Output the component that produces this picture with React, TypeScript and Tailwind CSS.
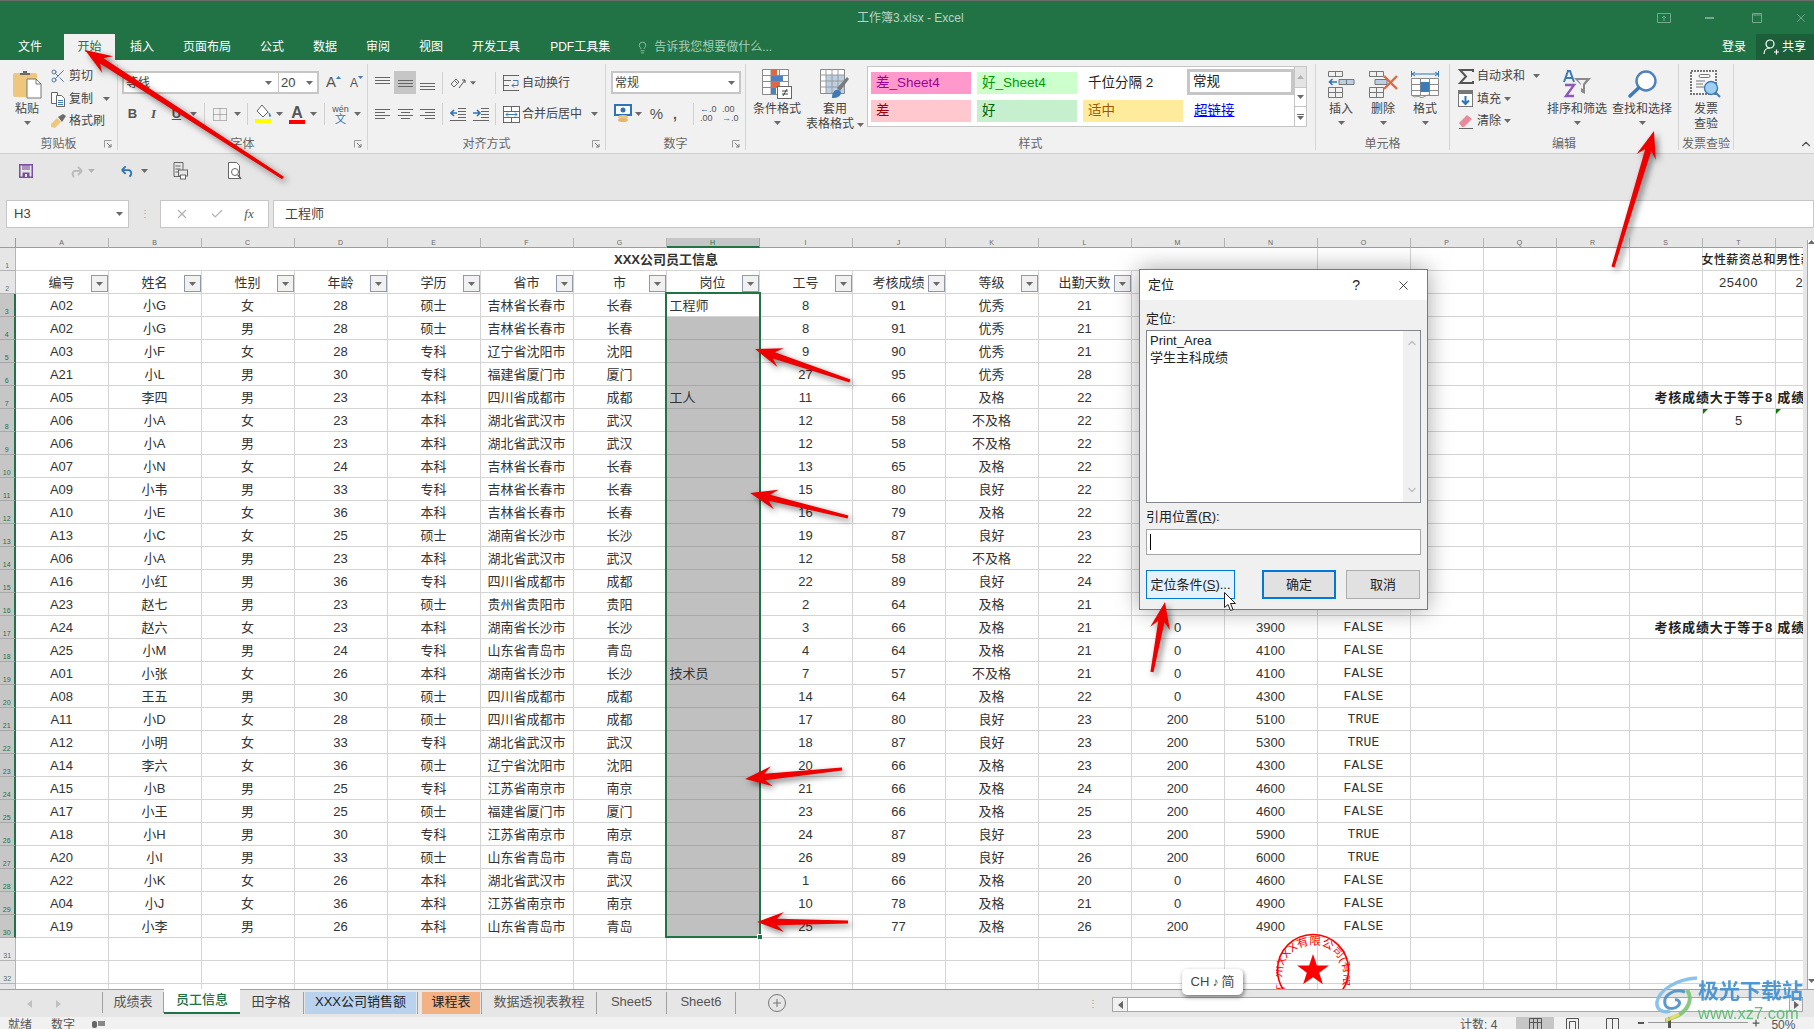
import type { ReactNode } from "react";
import { Scissors, X, Lightbulb, ChevronUp, Plus, Check } from "lucide-react";

const Caret = ({ className = "" }: { className?: string }) => (
  <svg width="7" height="4" viewBox="0 0 7 4" className={className}>
    <path d="M0 0h7L3.5 4z" fill="#6a6a6a" />
  </svg>
);

const Sep = ({ className = "" }: { className?: string }) => (
  <div className={"flex h-[22px] justify-center " + className}>
    <div className="h-full w-px bg-[#d0d0d0]" />
  </div>
);

const Launcher = () => (
  <svg width="9" height="9" viewBox="0 0 9 9" className="absolute bottom-[1px] right-[4px]">
    <path d="M0.5 0.5h7M0.5 0.5v7" stroke="#9a9a9a" fill="none" />
    <path d="M3 3l4 4M7 4v3H4" stroke="#777" fill="none" />
  </svg>
);

const Group = ({ width, label, launcher, children }: { width: string; label: string; launcher?: boolean; children: ReactNode }) => (
  <div className={"relative flex h-[86px] shrink-0 flex-col border-r border-[#d5d5d5] " + width}>
    <div className="flex h-[71px]">{children}</div>
    <div className="h-[15px] whitespace-nowrap text-center text-[12px] leading-[19px] text-[#666]">{label}</div>
    {launcher && <Launcher />}
  </div>
);

const BigButton = ({ width, icon, lines, caret = true }: { width: string; icon: ReactNode; lines: string[]; caret?: boolean }) => (
  <div className={"flex shrink-0 flex-col items-center pt-[4px] " + width}>
    <div className="flex h-[34px] items-center justify-center pb-[2px]">{icon}</div>
    {lines.map((l) => (
      <div key={l} className="whitespace-nowrap text-[12px] leading-[15px] text-[#444]">{l}</div>
    ))}
    {caret && lines.length === 1 && <Caret className="mt-[4px]" />}
  </div>
);

const Lines = ({ kind }: { kind: "top" | "mid" | "bot" | "left" | "center" | "right" }) => {
  const c = "#666";
  if (kind === "top" || kind === "mid" || kind === "bot") {
    const y = kind === "top" ? 1 : kind === "mid" ? 4 : 7;
    return (
      <svg width="15" height="14" viewBox="0 0 15 14">
        <path d={`M0 ${y}.5h15M0 ${y + 3}.5h15M0 ${y + 6}.5h15`} stroke={c} />
      </svg>
    );
  }
  const d =
    kind === "left"
      ? "M0 1.5h15M0 4.5h10M0 7.5h15M0 10.5h10"
      : kind === "center"
        ? "M0 1.5h15M3 4.5h9M0 7.5h15M3 10.5h9"
        : "M0 1.5h15M5 4.5h10M0 7.5h15M5 10.5h10";
  return (
    <svg width="15" height="12" viewBox="0 0 15 12">
      <path d={d} stroke={c} />
    </svg>
  );
};

const PasteIcon = () => (
  <svg width="30" height="29" viewBox="0 0 30 29">
    <rect x="1" y="3" width="24" height="24" rx="2" fill="#eec77f" />
    <path d="M8 5V3h3V1h4v2h3v2z" fill="#6b6b6b" />
    <path d="M15 9h9l5 5v14H15z" fill="#fff" stroke="#777" />
    <path d="M24 9v5h5" fill="none" stroke="#777" />
  </svg>
);

const CopyIcon = () => (
  <svg width="16" height="16" viewBox="0 0 16 16" fill="none" stroke="#666">
    <path d="M1.5 1.5h6v11h-6z" fill="#fff" />
    <path d="M6.5 4.5h5l3 3v8h-8z" fill="#fff" />
    <path d="M8 9.5h5M8 11.5h5M8 13.5h5" stroke="#3e7ab5" />
  </svg>
);

const BrushIcon = () => (
  <svg width="17" height="16" viewBox="0 0 17 16">
    <path d="M1 11l6-6 4 4-6 6-4-1z" fill="#eec77f" />
    <path d="M8 4l5-3 3 2-4 6z" fill="#6b6b6b" />
  </svg>
);

const FillIcon = () => (
  <svg width="17" height="20" viewBox="0 0 17 20">
    <path d="M7 1l6 7-5 5-6-6z" fill="#fff" stroke="#666" />
    <path d="M13 8c2 1 3 3 3 4s-2 1-2 0 0-2-1-4z" fill="#3e7ab5" />
    <rect x="0" y="15" width="16" height="4" fill="#ffff00" />
  </svg>
);

const FontColorIcon = () => (
  <div className="flex flex-col items-center leading-none">
    <span className="text-[16px] font-bold leading-[15px] text-[#555]">A</span>
    <div className="h-[4px] w-[16px] bg-[#ff0000]" />
  </div>
);

const OrientIcon = () => (
  <svg width="17" height="16" viewBox="0 0 17 16" fill="none" stroke="#666">
    <path d="M1 9l5-5 3 3-5 5z" />
    <path d="M5 6l2 2" />
    <path d="M9 13l6-8M15 5h-3M15 5v3" stroke="#555" />
  </svg>
);

const WrapIcon = () => (
  <svg width="17" height="16" viewBox="0 0 17 16" fill="none">
    <path d="M1 .5h15M1 5.5h7M1 10.5h5M1 15.5h15" stroke="#666" />
    <path d="M.5 0v16" stroke="#666" />
    <path d="M10 5.5h5v5H9M11 8.5l-2 2 2 2" stroke="#3e7ab5" />
  </svg>
);

const MergeIcon = () => (
  <svg width="17" height="17" viewBox="0 0 17 17" fill="none" stroke="#666">
    <rect x=".5" y=".5" width="16" height="16" fill="#fff" />
    <path d="M.5 5.5h16M.5 11.5h16M8.5 .5v5M8.5 11.5v5" />
    <path d="M3 8.5h11M5 6.5l-2 2 2 2M12 6.5l2 2-2 2" stroke="#3e7ab5" />
  </svg>
);

const IndentIcon = ({ inc }: { inc?: boolean }) => (
  <svg width="16" height="14" viewBox="0 0 16 14" fill="none">
    <path d="M8 1.5h8M8 4.5h8M8 7.5h8M8 10.5h8M0 13.5h16" stroke="#666" />
    <path d={inc ? "M0 6h6M4 3l3 3-3 3" : "M7 6H1M4 3L1 6l3 3"} stroke="#2f75b5" strokeWidth="1.6" />
  </svg>
);

const AccountingIcon = () => (
  <svg width="18" height="20" viewBox="0 0 18 20">
    <rect x="1" y="1" width="16" height="10" fill="#fff" stroke="#2f75b5" strokeWidth="2" />
    <circle cx="9" cy="6" r="2.5" fill="#2f75b5" />
    <ellipse cx="9" cy="13" rx="5" ry="2" fill="#eec77f" />
    <ellipse cx="9" cy="16" rx="5" ry="2" fill="#e3b866" />
  </svg>
);

const CondFormatIcon = () => (
  <svg width="30" height="30" viewBox="0 0 30 30">
    <path d="M.5.5h26v25H.5zM9 .5v25M17.5 .5v25M.5 6.5h26M.5 12.5h26M.5 18.5h26" fill="#fff" stroke="#8a8a8a" />
    <rect x="9" y="1" width="6" height="5" fill="#e0673f" />
    <rect x="9" y="7" width="12" height="5" fill="#4f81bd" />
    <rect x="9" y="13" width="8" height="5" fill="#e0673f" />
    <rect x="9" y="19" width="5" height="6" fill="#4f81bd" />
    <rect x="15.5" y="17.5" width="14" height="12" fill="#fff" stroke="#666" />
    <path d="M20 22h6M20 25h6M25 20l-4 7" stroke="#444" fill="none" />
  </svg>
);

const TableFormatIcon = () => (
  <svg width="30" height="30" viewBox="0 0 30 30">
    <path d="M.5.5h24v24H.5z" fill="#fff" stroke="#8a8a8a" />
    <rect x="6" y="6" width="18" height="18" fill="#bcd0e5" />
    <path d="M6 .5v24M12 .5v24M18 .5v24M.5 6h24M.5 12h24M.5 18h24" stroke="#9a9a9a" fill="none" />
    <path d="M17 19L27 8l2 2-9 12z" fill="#7a7a7a" />
    <path d="M12 29c0-6 3-9 7-8l2 2c0 4-3 6-9 6z" fill="#3e7ab5" />
  </svg>
);

const InsertCellIcon = () => (
  <svg width="27" height="27" viewBox="0 0 27 27" fill="none" stroke="#777">
    <path d="M.5.5h14v5H.5zM7.5 .5v5M.5 16.5h14v10H.5zM.5 21.5h14M7.5 16.5v10" />
    <path d="M11 8.5h15v5H11zM18.5 8.5v5" fill="#bcd0e5" />
    <path d="M9 11H2M4.5 8L1.5 11l3 3" stroke="#2f75b5" strokeWidth="1.6" />
  </svg>
);

const DeleteCellIcon = () => (
  <svg width="29" height="27" viewBox="0 0 29 27" fill="none" stroke="#777">
    <path d="M.5.5h14v5H.5zM7.5 .5v5M.5 16.5h14v10H.5zM.5 21.5h14M7.5 16.5v10" />
    <path d="M6 8.5h12v5H6z" fill="#bcd0e5" />
    <path d="M15 5l13 13M28 5L15 18" stroke="#e0673f" strokeWidth="2.4" />
  </svg>
);

const FormatCellIcon = () => (
  <svg width="28" height="30" viewBox="0 0 28 30" fill="none" stroke="#8a8a8a">
    <path d="M1 5h26" stroke="#2f75b5" />
    <path d="M.5 2v6M27.5 2v6" stroke="#2f75b5" />
    <path d="M4 3L1 5l3 2M24 3l3 2-3 2" stroke="#2f75b5" />
    <path d="M.5 9.5h27v17H.5zM9.5 9.5v17M18.5 9.5v17M.5 15.5h27M.5 21.5h27" fill="#fff" />
    <rect x="9.5" y="13" width="9" height="10" fill="#3e7ab5" stroke="none" />
    <path d="M1 26c2 4 5 0 8 2 3 2 5-2 9-2" />
  </svg>
);

const SumIcon = () => (
  <svg width="16" height="15" viewBox="0 0 16 15" fill="none">
    <path d="M15 3V1H2l6 6.5L2 14h13v-2" stroke="#555" strokeWidth="2" />
  </svg>
);

const FillDownIcon = () => (
  <svg width="15" height="17" viewBox="0 0 15 17">
    <rect x=".5" y=".5" width="14" height="16" fill="#fff" stroke="#777" />
    <rect x="0" y="0" width="15" height="4" fill="#777" />
    <path d="M7.5 6v8M4 10.5l3.5 3.5 3.5-3.5" stroke="#2f75b5" strokeWidth="2" fill="none" />
  </svg>
);

const EraserIcon = () => (
  <svg width="16" height="15" viewBox="0 0 16 15">
    <path d="M1 9l8-8 5 4-8 8H4z" fill="#e98a9a" />
    <path d="M1 14.5h14" stroke="#666" />
  </svg>
);

const SortIcon = () => (
  <svg width="30" height="28" viewBox="0 0 30 28">
    <path d="M2 12L6 1h2l4 11M4 8h6" stroke="#3e7ab5" strokeWidth="2" fill="none" />
    <path d="M3 15h9L4 26h8" stroke="#8a5ab5" strokeWidth="2.4" fill="none" />
    <path d="M12 8h17l-6 7v9l-4-2v-7z" fill="#8a8a8a" />
    <path d="M16 10h8l-3 4v5l-2-1v-4z" fill="#f1f1f1" />
  </svg>
);

const FindIcon = () => (
  <svg width="29" height="28" viewBox="0 0 29 28" fill="none">
    <circle cx="18" cy="11" r="9.5" stroke="#4f81bd" strokeWidth="2.4" fill="#fff" />
    <path d="M10.5 18L2 26" stroke="#3e7ab5" strokeWidth="3.4" strokeLinecap="round" />
  </svg>
);

const InvoiceIcon = () => (
  <svg width="32" height="28" viewBox="0 0 32 28" fill="none">
    <rect x="1" y="1" width="25" height="23" fill="#f6f6f6" stroke="#777" strokeWidth="2" strokeDasharray="2 1" />
    <rect x="9" y="4.5" width="11" height="3" rx="1.5" stroke="#777" />
    <path d="M6 11h9M6 14h7M6 17h9" stroke="#777" />
    <circle cx="21" cy="18" r="6.5" fill="#9fd0f2" stroke="#3e7ab5" strokeWidth="1.4" />
    <path d="M26 23l4 4" stroke="#3e7ab5" strokeWidth="2" />
  </svg>
);

const Ribbon = () => (
  <div className="flex h-[94px] shrink-0 border-b border-[#d0d0d0] bg-[#f1f1f1] pt-[4px]">
    <Group width="w-[118px]" label="剪贴板" launcher>
      <div className="ml-[9px] flex w-[36px] flex-col items-center pt-[4px]">
        <div className="flex h-[34px] items-center pb-[2px]"><PasteIcon /></div>
        <div className="text-[12px] leading-[15px] text-[#444]">粘贴</div>
        <Caret className="mt-[4px]" />
      </div>
      <div className="ml-[5px] flex flex-col pt-px">
        {[
          [<Scissors key="s" size={16} strokeWidth={1.4} className="text-[#4a6f98]" />, "剪切"],
          [<CopyIcon key="c" />, "复制"],
          [<BrushIcon key="b" />, "格式刷"],
        ].map(([icon, label], i) => (
          <div key={i} className="flex h-[22.5px] items-center text-[12px] text-[#444]">
            <span className="flex w-[19px] justify-start">{icon}</span>
            <span>{label}</span>
            {i === 1 && <Caret className="ml-[10px]" />}
          </div>
        ))}
      </div>
    </Group>

    <Group width="w-[250px]" label="字体" launcher>
      <div className="flex flex-col">
        <div className="ml-[4px] mt-[7px] flex h-[23px] items-center">
          <div className="flex h-full w-[157px] items-center justify-between border-2 border-r border-[#c6c6c6] bg-white px-[2px] text-[12px] text-[#444]">
            <span>等线</span>
            <Caret className="mr-[4px]" />
          </div>
          <div className="flex h-full w-[40px] items-center justify-between border-2 border-l-0 border-[#c6c6c6] bg-white pl-[2px] pr-[4px] text-[13px] text-[#444]">
            <span>20</span>
            <Caret />
          </div>
          <span className="ml-[7px] text-[15px] text-[#555]">A</span>
          <svg width="5" height="3" viewBox="0 0 5 3" className="mb-[10px]"><path d="M0 3h5L2.5 0z" fill="#3e7ab5" /></svg>
          <span className="ml-[9px] text-[12px] text-[#555]">A</span>
          <svg width="5" height="3" viewBox="0 0 5 3" className="mb-[10px]"><path d="M0 0h5L2.5 3z" fill="#3e7ab5" /></svg>
        </div>
        <div className="mt-[8px] flex h-[24px] items-center pl-[6px]">
          <span className="w-[17px] text-center font-bold text-[13px] text-[#555]">B</span>
          <span className="w-[25px] text-center font-bold italic text-[13px] text-[#555] [font-family:'Liberation_Serif',serif]">I</span>
          <span className="w-[21px] text-center font-bold text-[13px] text-[#555] underline">U</span>
          <span className="flex w-[12px] justify-center"><Caret /></span>
          <Sep className="w-[10px]" />
          <span className="flex w-[22px] justify-center">
            <svg width="14" height="13" viewBox="0 0 14 13" fill="none" stroke="#777" strokeDasharray="1 1"><path d="M.5.5h13v12H.5zM7 .5v12M.5 6.5h13" /></svg>
          </span>
          <span className="flex w-[12px] justify-center"><Caret /></span>
          <Sep className="w-[8px]" />
          <span className="flex w-[24px] justify-center"><FillIcon /></span>
          <span className="flex w-[9px] justify-center"><Caret /></span>
          <span className="flex w-[26px] justify-center"><FontColorIcon /></span>
          <span className="flex w-[7px] justify-center"><Caret /></span>
          <Sep className="w-[14px]" />
          <span className="flex w-[19px] flex-col items-center text-[9px] leading-[9px] text-[#555]">
            wén
            <span className="text-[11px] leading-[10px] text-[#2f75b5]">文</span>
          </span>
          <span className="flex w-[14px] justify-center"><Caret /></span>
        </div>
      </div>
    </Group>

    <Group width="w-[238px]" label="对齐方式" launcher>
      <div className="flex flex-col pl-[3px]">
        <div className="mt-[7px] flex h-[23px] items-center">
          <span className="flex w-[23px] justify-center"><Lines kind="top" /></span>
          <span className="flex h-full w-[22px] items-center justify-center bg-[#c6c6c6]"><Lines kind="mid" /></span>
          <span className="flex w-[22px] justify-center"><Lines kind="bot" /></span>
          <Sep className="w-[8px]" />
          <span className="flex w-[24px] justify-center"><OrientIcon /></span>
          <span className="flex w-[6px] justify-center"><Caret /></span>
          <Sep className="ml-[15px] w-[9px]" />
          <span className="ml-[3px] w-[17px]"><WrapIcon /></span>
          <span className="ml-[2px] text-[12px] text-[#444]">自动换行</span>
        </div>
        <div className="mt-[8px] flex h-[24px] items-center">
          <span className="flex w-[23px] justify-center"><Lines kind="left" /></span>
          <span className="flex w-[22px] justify-center"><Lines kind="center" /></span>
          <span className="flex w-[22px] justify-center"><Lines kind="right" /></span>
          <Sep className="w-[8px]" />
          <span className="flex w-[24px] justify-center"><IndentIcon /></span>
          <span className="flex w-[21px] justify-center"><IndentIcon inc /></span>
          <Sep className="w-[9px]" />
          <span className="ml-[3px] w-[17px]"><MergeIcon /></span>
          <span className="ml-[2px] text-[12px] text-[#444]">合并后居中</span>
          <Caret className="ml-[9px]" />
        </div>
      </div>
    </Group>

    <Group width="w-[140px]" label="数字" launcher>
      <div className="flex flex-col">
        <div className="ml-[5px] mt-[7px] flex h-[23px] w-[130px] items-center justify-between border-2 border-[#c6c6c6] bg-white pl-[2px] pr-[4px] text-[12px] text-[#444]">
          <span>常规</span>
          <Caret />
        </div>
        <div className="mt-[8px] flex h-[24px] items-center pl-[8px]">
          <span className="w-[18px]"><AccountingIcon /></span>
          <span className="flex w-[13px] justify-center"><Caret /></span>
          <span className="w-[23px] text-center text-[15px] text-[#555]">%</span>
          <span className="w-[14px] text-center text-[14px] font-bold text-[#555]">,</span>
          <Sep className="ml-[6px] w-[10px]" />
          <span className="ml-[2px] w-[22px] whitespace-nowrap text-[9px] leading-[9px] text-[#555]">
            <span className="text-[#2f75b5]">←</span>.0<br />.00
          </span>
          <span className="w-[18px] whitespace-nowrap text-[9px] leading-[9px] text-[#555]">
            .00<br /><span className="text-[#2f75b5]">→</span>.0
          </span>
        </div>
      </div>
    </Group>

    <Group width="w-[570px]" label="样式">
      <BigButton width="ml-[7px] w-[48px]" icon={<CondFormatIcon />} lines={["条件格式"]} />
      <div className="ml-[3px] flex w-[62px] flex-col items-center pt-[4px]">
        <div className="flex h-[34px] items-center pb-[2px]"><TableFormatIcon /></div>
        <div className="text-[12px] leading-[15px] text-[#444]">套用</div>
        <div className="flex items-center whitespace-nowrap text-[12px] leading-[15px] text-[#444]">
          表格格式
          <Caret className="ml-[3px]" />
        </div>
      </div>
      <div className="ml-[1px] mt-[2px] flex h-[61px] w-[440px] border border-[#c6c6c6] bg-white">
        <div className="grid flex-1 grid-cols-[100px_100px_100px_105px] grid-rows-[22px_22px] content-start gap-x-[6px] gap-y-[6px] pl-[3px] pt-[5px] text-[13.5px] leading-[22px]">
          <div className="bg-[#ff99cc] pl-[5px] text-[#9c0099]">差_Sheet4</div>
          <div className="bg-[#ccffcc] pl-[5px] text-[#009900]">好_Sheet4</div>
          <div className="pl-[5px] text-[#222]">千位分隔 2</div>
          <div className="-ml-[2px] -mt-[3px] h-[26px] border-[3px] border-[#c6c6c6] pl-[3px] leading-[20px] text-[#222]">常规</div>
          <div className="bg-[#ffc7ce] pl-[5px] text-[#9c0006]">差</div>
          <div className="bg-[#c6efce] pl-[5px] text-[#006100]">好</div>
          <div className="bg-[#ffeb9c] pl-[5px] text-[#9c5700]">适中</div>
          <div className="pl-[5px] text-[#0000ff] underline">超链接</div>
        </div>
        <div className="flex w-[14px] flex-col border-l border-[#c6c6c6]">
          <div className="flex h-[21px] items-center justify-center border-b border-[#c6c6c6] bg-[#e4e4e4]">
            <Caret className="rotate-180 opacity-40" />
          </div>
          <div className="flex h-[19px] items-center justify-center border-b border-[#c6c6c6]"><Caret /></div>
          <div className="flex flex-1 flex-col items-center justify-center gap-[1px]">
            <div className="h-px w-[7px] bg-[#6a6a6a]" />
            <Caret />
          </div>
        </div>
      </div>
    </Group>

    <Group width="w-[134px]" label="单元格">
      <BigButton width="ml-[4px] w-[42px]" icon={<InsertCellIcon />} lines={["插入"]} />
      <BigButton width="w-[42px]" icon={<DeleteCellIcon />} lines={["删除"]} />
      <BigButton width="w-[42px]" icon={<FormatCellIcon />} lines={["格式"]} />
    </Group>

    <Group width="w-[229px]" label="编辑">
      <div className="ml-[8px] flex w-[87px] shrink-0 flex-col pt-px text-[12px] text-[#444]">
        <div className="flex h-[22.5px] items-center">
          <span className="w-[19px]"><SumIcon /></span>自动求和<Caret className="ml-[8px]" />
        </div>
        <div className="flex h-[22.5px] items-center">
          <span className="w-[19px]"><FillDownIcon /></span>填充<Caret className="ml-[3px]" />
        </div>
        <div className="flex h-[22.5px] items-center">
          <span className="w-[19px]"><EraserIcon /></span>清除<Caret className="ml-[3px]" />
        </div>
      </div>
      <BigButton width="w-[64px]" icon={<SortIcon />} lines={["排序和筛选"]} />
      <BigButton width="w-[66px]" icon={<FindIcon />} lines={["查找和选择"]} />
    </Group>

    <Group width="w-[55px]" label="发票查验">
      <BigButton width="w-full" icon={<InvoiceIcon />} lines={["发票", "查验"]} />
    </Group>

    <div className="flex flex-1 items-end justify-end pb-[2px] pr-[1px]">
      <ChevronUp size={14} className="text-[#555]" />
    </div>
  </div>
);

const TABS: [string, string][] = [
  ["文件", "ml-[18px]"],
  ["开始", "ml-[22px]"],
  ["插入", "ml-[15px]"],
  ["页面布局", "ml-[29px]"],
  ["公式", "ml-[29px]"],
  ["数据", "ml-[29px]"],
  ["审阅", "ml-[29px]"],
  ["视图", "ml-[29px]"],
  ["开发工具", "ml-[29px]"],
  ["PDF工具集", "ml-[30px]"],
];

const TitleBar = () => (
  <div className="h-[60px] shrink-0 border-t border-[#6b6b6b] bg-[#217346]">
    <div className="relative flex h-[33px] items-center">
      <div className="w-[857px]" />
      <span className="text-[12px] text-[#b9d3c5]">工作簿3.xlsx - Excel</span>
      <div className="ml-auto flex items-center pr-[6px] text-[#76a78f]">
        <svg width="14" height="10" viewBox="0 0 14 10" fill="none" stroke="currentColor"><path d="M.5.5h13v9H.5zM7 8V3M5 5l2-2 2 2" /></svg>
        <div className="ml-[34px] h-[2px] w-[9px] bg-current" />
        <svg width="10" height="10" viewBox="0 0 10 10" fill="none" stroke="currentColor" className="ml-[38px]"><path d="M.5.5h9v9h-9zM.5 2h9" /></svg>
        <X size={14} strokeWidth={1.6} className="ml-[32px]" />
      </div>
    </div>
    <div className="flex h-[26px] items-stretch text-[12px] text-white">
      {TABS.map(([name, ml]) =>
        name === "开始" ? (
          <div key={name} className="ml-[22px] flex w-[51px] items-center justify-center bg-[#f1f1f1] text-[#217346]">{name}</div>
        ) : (
          <div key={name} className={"flex items-center whitespace-nowrap " + ml}>{name}</div>
        ),
      )}
      <div className="ml-[26px] flex items-center text-[#a9cdb9]">
        <Lightbulb size={13} strokeWidth={1.4} />
        <span className="ml-[5px]">告诉我您想要做什么...</span>
      </div>
      <div className="ml-auto flex items-center">登录</div>
      <div className="ml-[10px] flex w-[58px] items-center bg-[#1b5e39] pl-[7px]">
        <svg width="16" height="16" viewBox="0 0 16 16" fill="none" stroke="#fff" strokeWidth="1.2">
          <circle cx="7" cy="5" r="4" />
          <path d="M1 15c0-4 3-6 6-6M11 13h5M13.5 10.5v5" />
        </svg>
        <span className="ml-[3px]">共享</span>
      </div>
    </div>
  </div>
);

const QuickAccess = () => (
  <div className="flex h-[46px] shrink-0 items-center bg-[#e6e6e6] pb-[12px] pl-[19px]">
    <svg width="14" height="14" viewBox="0 0 14 14" fill="none">
      <path d="M.75.75h12.5v12.5H.75z" stroke="#7a4f9e" strokeWidth="1.5" fill="#e6e6e6" />
      <rect x="3" y="1" width="8" height="5" fill="#7a4f9e" opacity=".55" />
      <rect x="3.5" y="8.5" width="7" height="4.5" fill="#7a4f9e" />
      <rect x="6" y="10" width="2" height="3" fill="#e6e6e6" />
    </svg>
    <svg width="16" height="14" viewBox="0 0 16 14" fill="none" className="ml-[35px]">
      <path d="M14 7H6a4 4 0 0 0 0 6M14 7l-4-4M14 7l-4 4" stroke="#bcbcbc" strokeWidth="2" />
    </svg>
    <Caret className="ml-[4px] opacity-40" />
    <svg width="15" height="14" viewBox="0 0 16 14" fill="none" className="ml-[25px]">
      <path d="M2 6h8a4 4 0 0 1 0 7M2 6l4-4M2 6l4 4" stroke="#2f75b5" strokeWidth="2" />
    </svg>
    <Caret className="ml-[6px]" />
    <svg width="16" height="18" viewBox="0 0 15 18" fill="none" stroke="#666" className="ml-[25px]">
      <path d="M.5.5h9v14h-9zM2 4h5M2 7h5M2 10h5" />
      <rect x="5" y="8" width="9" height="6" fill="#e6e6e6" />
      <rect x="7" y="13" width="5" height="4" fill="#fff" />
    </svg>
    <svg width="15" height="18" viewBox="0 0 15 18" fill="none" stroke="#666" className="ml-[39px]">
      <path d="M.5.5h8l3 3v13h-11z" fill="#fff" />
      <circle cx="7" cy="10" r="3.5" />
      <path d="M10 13l3 4" strokeWidth="1.6" />
    </svg>
  </div>
);

const FormulaBar = () => (
  <div className="flex h-[28px] shrink-0 items-stretch bg-[#e6e6e6] pl-[6px]">
    <div className="flex w-[123px] items-center justify-between border border-[#c6c6c6] bg-white pl-[7px] pr-[5px] text-[13px] text-[#444]">
      H3
      <Caret />
    </div>
    <div className="flex w-[31px] items-center justify-center text-[#a0a0a0]">
      <span className="text-[10px] leading-none">⋮</span>
    </div>
    <div className="flex w-[109px] items-center justify-around border border-[#c6c6c6] bg-white px-[4px] text-[#b0b0b0]">
      <X size={14} />
      <Check size={14} />
      <span className="text-[13px] italic text-[#555] [font-family:'Liberation_Serif',serif]">fx</span>
    </div>
    <div className="ml-[4px] flex flex-1 items-center border border-[#c6c6c6] bg-white pl-[11px] text-[13px] text-[#444]">工程师</div>
  </div>
);

const COLS = "ABCDEFGHIJKLMNOPQRSTU".split("");
const HEAD = ["编号", "姓名", "性别", "年龄", "学历", "省市", "市", "岗位", "工号", "考核成绩", "等级", "出勤天数"];
const DATA: string[] = [
  "A02 小G 女 28 硕士 吉林省长春市 长春 工程师 8 91 优秀 21",
  "A02 小G 男 28 硕士 吉林省长春市 长春 - 8 91 优秀 21",
  "A03 小F 女 28 专科 辽宁省沈阳市 沈阳 - 9 90 优秀 21",
  "A21 小L 男 30 专科 福建省厦门市 厦门 - 27 95 优秀 28",
  "A05 李四 男 23 本科 四川省成都市 成都 工人 11 66 及格 22",
  "A06 小A 女 23 本科 湖北省武汉市 武汉 - 12 58 不及格 22",
  "A06 小A 男 23 本科 湖北省武汉市 武汉 - 12 58 不及格 22",
  "A07 小N 女 24 本科 吉林省长春市 长春 - 13 65 及格 22",
  "A09 小韦 男 33 专科 吉林省长春市 长春 - 15 80 良好 22",
  "A10 小E 女 36 本科 吉林省长春市 长春 - 16 79 及格 22",
  "A13 小C 女 25 硕士 湖南省长沙市 长沙 - 19 87 良好 23",
  "A06 小A 男 23 本科 湖北省武汉市 武汉 - 12 58 不及格 22",
  "A16 小红 男 36 专科 四川省成都市 成都 - 22 89 良好 24",
  "A23 赵七 男 23 硕士 贵州省贵阳市 贵阳 - 2 64 及格 21 0 3900 FALSE",
  "A24 赵六 女 23 本科 湖南省长沙市 长沙 - 3 66 及格 21 0 3900 FALSE",
  "A25 小M 男 24 专科 山东省青岛市 青岛 - 4 64 及格 21 0 4100 FALSE",
  "A01 小张 女 26 本科 湖南省长沙市 长沙 技术员 7 57 不及格 21 0 4100 FALSE",
  "A08 王五 男 30 硕士 四川省成都市 成都 - 14 64 及格 22 0 4300 FALSE",
  "A11 小D 女 28 硕士 四川省成都市 成都 - 17 80 良好 23 200 5100 TRUE",
  "A12 小明 女 33 专科 湖北省武汉市 武汉 - 18 87 良好 23 200 5300 TRUE",
  "A14 李六 女 36 硕士 辽宁省沈阳市 沈阳 - 20 66 及格 23 200 4300 FALSE",
  "A15 小B 男 25 专科 江苏省南京市 南京 - 21 66 及格 24 200 4600 FALSE",
  "A17 小王 男 25 硕士 福建省厦门市 厦门 - 23 66 及格 25 200 4600 FALSE",
  "A18 小H 男 30 专科 江苏省南京市 南京 - 24 87 良好 23 200 5900 TRUE",
  "A20 小I 男 33 硕士 山东省青岛市 青岛 - 26 89 良好 26 200 6000 TRUE",
  "A22 小K 女 26 本科 湖北省武汉市 武汉 - 1 66 及格 20 0 4600 FALSE",
  "A04 小J 女 36 本科 江苏省南京市 南京 - 10 78 及格 21 0 4900 FALSE",
  "A19 小李 男 26 本科 山东省青岛市 青岛 - 25 77 及格 26 200 4900 FALSE",
];

const GRID = "grid h-[23px] w-[1848px] grid-cols-[15.5px_repeat(15,93px)_repeat(6,73px)]";
const CELL = "flex items-center justify-center whitespace-nowrap border-b border-r border-[#d4d4d4] pt-px text-[13px] text-[#333]";

const RowHead = ({ n }: { n: number }) => {
  const sel = n >= 3 && n <= 30;
  return (
    <div className={"flex items-end justify-center border-b text-[7px] leading-[9px] " + (sel ? "border-b-[#a8a8a8] border-r-2 border-r-[#217346] bg-[#c6c6c6] text-[#217346]" : "border-r border-[#b4b4b4] bg-[#e6e6e6] text-[#666]")}>
      {n}
    </div>
  );
};

const FilterButton = () => (
  <div className="absolute bottom-[1px] right-0 flex h-[17px] w-[17px] items-center justify-center border border-[#8e9aab] bg-[#f1f1f1]">
    <Caret />
  </div>
);

const Extra = ({ cols }: { cols: Record<number, ReactNode> }) => (
  <>
    {Array.from({ length: 6 }, (_, i) => (
      <div key={i} className={CELL + " relative overflow-visible"}>{cols[i]}</div>
    ))}
  </>
);

const Marker = () => (
  <span className="absolute left-0 top-0 h-0 w-0 border-r-[5px] border-t-[5px] border-r-transparent border-t-[#0a7a0a]" />
);

const Sheet = () => (
  <div className="relative h-[751px] shrink-0 overflow-hidden bg-white">
    <div className="flex">
      <div className="w-[1803px] overflow-hidden">
        <div className="grid h-[10px] w-[1848px] grid-cols-[15.5px_repeat(15,93px)_repeat(6,73px)]">
          <div className="border-b border-r border-[#9c9c9c] bg-[#e6e6e6]" />
          {COLS.map((c) => (
            <div key={c} className={"flex items-center justify-center border-b border-r text-[7px] leading-none " + (c === "H" ? "border-b-2 border-b-[#217346] border-r-[#a8a8a8] bg-[#c6c6c6] text-[#217346]" : "border-b-[#9c9c9c] border-r-[#b4b4b4] bg-[#e6e6e6] text-[#666]")}>
              {c}
            </div>
          ))}
        </div>

        <div className={GRID}>
          <RowHead n={1} />
          <div className={CELL + " col-span-14 font-bold"}>XXX公司员工信息</div>
          <div className={CELL} />
          <Extra cols={{ 4: <span className="absolute -left-px text-[12px] font-medium tracking-[0.4px] text-[#222]">女性薪资总和男性薪资总和</span> }} />
        </div>

        <div className={GRID}>
          <RowHead n={2} />
          {HEAD.map((h) => (
            <div key={h} className={CELL + " relative"}>
              {h}
              <FilterButton />
            </div>
          ))}
          {[0, 1, 2].map((i) => <div key={i} className={CELL} />)}
          <Extra cols={{ 4: <span className="tracking-[0.6px]">25400</span>, 5: <span className="ml-[7px] tracking-[0.6px]">25900</span> }} />
        </div>

        {Array.from({ length: 31 }, (_, i) => {
          const n = i + 3;
          const parts = DATA[i]?.split(" ") ?? [];
          return (
            <div key={n} className={GRID}>
              <RowHead n={n} />
              {Array.from({ length: 15 }, (_, c) => {
                const v = parts[c];
                if (c === 7) {
                  return (
                    <div key={c} className={"flex items-center justify-start whitespace-nowrap border-b border-r pl-[3px] pt-px text-[13px] text-[#333] " + (n === 3 ? "border-[#d4d4d4] bg-white" : n <= 30 ? "border-[#a8a8a8] bg-[#c0c0c0]" : "border-[#d4d4d4]")}>
                      {v && v !== "-" ? v : ""}
                    </div>
                  );
                }
                return (
                  <div key={c} className={CELL + (c === 14 ? " text-[12px] tracking-[0.2px] [font-family:'Liberation_Mono',monospace]" : "")}>{v}</div>
                );
              })}
              <Extra
                cols={
                  n === 7 || n === 17
                    ? { 3: <span className="absolute left-[25px] text-[13px] font-bold tracking-[0.8px] text-[#222]">考核成绩大于等于8 成绩大于等于8</span> }
                    : n === 8
                      ? { 4: <><Marker />5</>, 5: <Marker /> }
                      : {}
                }
              />
            </div>
          );
        })}
      </div>
      <div className="flex h-[751px] w-[11px] flex-col bg-[#e6e6e6] pl-[4px] pt-[2px]">
        <div className="flex flex-1 flex-col justify-between border-l border-[#a6a6a6] bg-white">
          <Caret className="rotate-180" />
          <Caret className="mb-[6px]" />
        </div>
      </div>
    </div>

    {/* selection box */}
    <div className="absolute left-[665px] top-[54px] h-[646px] w-[96px] border-2 border-[#217346]" />
    <div className="absolute left-[757px] top-[696px] h-[6px] w-[6px] border border-white bg-[#217346]" />

    {/* stamp */}
    <svg width="74" height="74" viewBox="0 0 74 74" className="absolute left-[1276px] top-[695px]">
      <circle cx="37" cy="37" r="35.5" fill="none" stroke="#ff0000" strokeWidth="1.6" />
      <path id="stamp-arc" d="M9 56A31 31 0 1 1 65 56" fill="none" />
      <text fontSize="11" fill="#ff0000">
        <textPath href="#stamp-arc" startOffset="0" textLength={148} lengthAdjust="spacingAndGlyphs">广州XXX有限公司(有限合伙)</textPath>
      </text>
      <path d="M37 21l3.9 11.5h12l-9.7 7.2 3.7 11.6-9.9-7-9.9 7 3.7-11.6-9.7-7.2h12z" fill="#ff0000" />
    </svg>
  </div>
);

const SHEET_TABS: { name: string; cls: string }[] = [
  { name: "田字格", cls: "w-[62px] text-[#444]" },
  { name: "XXX公司销售额", cls: "w-[111px] bg-[#b9d3ee] text-[#222]" },
  { name: "课程表", cls: "ml-[3px] w-[58px] bg-[#f4b183] text-[#222]" },
  { name: "数据透视表教程", cls: "w-[112px] text-[#555]" },
  { name: "Sheet5", cls: "w-[67px] text-[#555]" },
  { name: "Sheet6", cls: "w-[66px] text-[#555]" },
];

const TabBar = () => (
  <div className="flex h-[28px] shrink-0 border-t border-[#a0a0a0] bg-[#e6e6e6] text-[13px]">
    <div className="flex w-[102px] shrink-0 items-center pl-[27px] text-[#c0c0c0]">
      <svg width="5" height="8" viewBox="0 0 5 8"><path d="M5 0v8L0 4z" fill="currentColor" /></svg>
      <svg width="5" height="8" viewBox="0 0 5 8" className="ml-[24px]"><path d="M0 0v8l5-4z" fill="currentColor" /></svg>
    </div>
    <div className="flex h-[25px] w-[1010px] shrink-0 items-stretch">
      <div className="my-[2px] flex w-[62px] items-center justify-center border-x border-[#a0a0a0] pb-[2px] text-[#555]">成绩表</div>
      <div className="-mt-px flex h-[25px] w-[76px] items-center justify-center border-b-2 border-[#217346] bg-white pb-[1px] font-medium text-[#217346]">员工信息</div>
      {SHEET_TABS.map((t) => (
        <div key={t.name} className="flex items-stretch">
          <div className={"mt-[2px] flex h-[22px] items-center justify-center whitespace-nowrap pb-[2px] " + t.cls}>{t.name}</div>
          <div className="mb-[1px] ml-[1px] mr-px mt-[2px] w-px bg-[#a0a0a0]" />
        </div>
      ))}
      <div className="ml-[31px] flex h-[26px] items-center text-[#777]">
        <div className="flex h-[18px] w-[18px] items-center justify-center rounded-full border border-[#777]">
          <Plus size={12} strokeWidth={2.2} />
        </div>
      </div>
      <div className="ml-auto flex h-[26px] items-center pr-[14px] text-[10px] text-[#999]">⋮</div>
    </div>
    <div className="mt-[7px] flex h-[15px] w-[691px] shrink-0 items-stretch border border-[#a6a6a6] bg-white">
      <div className="flex w-[15px] items-center justify-center border-r border-[#a6a6a6] bg-[#f1f1f1]">
        <svg width="5" height="8" viewBox="0 0 5 8"><path d="M5 0v8L0 4z" fill="#666" /></svg>
      </div>
      <div className="flex-1" />
      <div className="flex w-[13px] items-center justify-center border-l border-[#a6a6a6] bg-[#f1f1f1]">
        <svg width="5" height="8" viewBox="0 0 5 8"><path d="M0 0v8l5-4z" fill="#666" /></svg>
      </div>
    </div>
  </div>
);

const StatusBar = () => (
  <div className="flex h-[12px] shrink-0 items-start bg-[#f1f1f1] text-[12px] leading-[16px] text-[#555]">
    <span className="ml-[8px]">就绪</span>
    <span className="ml-[19px]">数字</span>
    <svg width="13" height="10" viewBox="0 0 13 10" className="ml-[17px] mt-[3px]" fill="#666">
      <rect x="0" y="1" width="5" height="7" rx="2" />
      <rect x="6" y="1" width="7" height="5" fill="#888" />
    </svg>
    <span className="ml-[1355px]">计数: 4</span>
    <div className="ml-[19px] flex h-[12px] w-[38px] items-start justify-center bg-[#c6c6c6] pt-[1px]">
      <svg width="13" height="11" viewBox="0 0 13 11" fill="none" stroke="#555"><path d="M.5.5h12v11H.5zM4.5 .5v11M8.5 .5v11M.5 4.5h12" /></svg>
    </div>
    <svg width="13" height="11" viewBox="0 0 13 11" fill="none" stroke="#555" className="ml-[12px] mt-[1px]"><path d="M.5.5h12v11H.5zM3.5 3.5h6v8h-6z" /></svg>
    <svg width="13" height="11" viewBox="0 0 13 11" fill="none" stroke="#555" className="ml-[27px] mt-[1px]"><path d="M.5.5h12v11H.5zM6.5 .5v11" /></svg>
    <div className="ml-[19px] mt-[5px] h-[2px] w-[6px] bg-[#555]" />
    <div className="relative ml-[4px] mt-[5px] h-px w-[100px] bg-[#999]">
      <div className="absolute -top-[5px] left-[20px] h-[11px] w-[3px] bg-[#555]" />
    </div>
    <Plus size={10} strokeWidth={3} className="ml-[3px] mt-[1px] text-[#555]" />
    <span className="ml-[10px]">50%</span>
  </div>
);

const Dialog = () => (
  <div className="absolute left-[1139px] top-[269px] flex h-[341px] w-[289px] flex-col border border-[#7a7a7a] bg-[#f0f0f0] text-[13px] text-[#222] shadow-[0_0_22px_rgba(0,0,0,0.35)]">
    <div className="flex h-[30px] shrink-0 items-center bg-white pl-[8px]">
      <span>定位</span>
      <span className="ml-auto text-[14px]">?</span>
      <X size={15} strokeWidth={1.3} className="ml-[36px] mr-[16px]" />
    </div>
    <div className="flex flex-1 flex-col px-[6px] pt-[10px]">
      <div className="h-[18px] leading-[18px]">定位:</div>
      <div className="mt-[2px] flex h-[173px] w-[275px] border border-[#828790] bg-white">
        <div className="flex-1 pl-[3px] pt-[1px] leading-[17px]">
          <div>Print_Area</div>
          <div>学生主科成绩</div>
        </div>
        <div className="flex w-[17px] flex-col items-center justify-between bg-[#f0f0f0] py-[6px] text-[#c0c0c0]">
          <ChevronUp size={12} strokeWidth={3} />
          <ChevronUp size={12} strokeWidth={3} className="rotate-180" />
        </div>
      </div>
      <div className="mt-[5px] h-[18px] leading-[18px]">引用位置(<span className="underline">R</span>):</div>
      <div className="mt-[3px] flex h-[26px] w-[275px] items-center border border-[#a6a6a6] bg-white pl-[3px]">
        <div className="h-[16px] w-px bg-black" />
      </div>
      <div className="mt-[15px] flex h-[29px] w-[275px]">
        <div className="flex w-[89px] items-center justify-center border border-[#0078d7] bg-[#e5f1fb]">定位条件(<span className="underline">S</span>)...</div>
        <div className="ml-[27px] flex w-[74px] items-center justify-center border-2 border-[#0078d7] bg-[#e1e1e1]">确定</div>
        <div className="ml-[10px] flex w-[74px] items-center justify-center border border-[#adadad] bg-[#e1e1e1]">取消</div>
      </div>
    </div>
  </div>
);

const ARROWS = [
  [283, 178, 85, 50],
  [1613, 267, 1654, 131],
  [1152, 672, 1165, 602],
  [850, 381, 755, 349],
  [848, 517, 750, 493],
  [842, 769, 745, 779],
  [848, 922, 757, 922],
];

const arrowPoints = ([x1, y1, x2, y2]: number[]) => {
  const len = Math.hypot(x2 - x1, y2 - y1);
  const ux = (x2 - x1) / len;
  const uy = (y2 - y1) / len;
  const at = (along: number, side: number) => `${x1 + ux * along - uy * side},${y1 + uy * along + ux * side}`;
  const neck = len - 20;
  const back = len - 27;
  return [at(0, 1.6), at(neck, 3.2), at(back, 10), at(len, 0), at(back, -10), at(neck, -3.2), at(0, -1.6)].join(" ");
};

export default function App() {
  return (
    <div className="relative flex h-[1029px] w-[1814px] flex-col overflow-hidden bg-[#e6e6e6] [font-family:'Liberation_Sans','Noto_Sans_CJK_SC',sans-serif]">
      <TitleBar />
      <Ribbon />
      <QuickAccess />
      <FormulaBar />
      <div className="h-[10px] shrink-0 bg-[#e6e6e6]" />
      <Sheet />
      <TabBar />
      <StatusBar />

      <Dialog />

      {/* pointer over the button */}
      <svg width="14" height="20" viewBox="0 0 14 20" className="absolute left-[1224px] top-[592px]">
        <path d="M.5.5v15l3.5-3 2.5 6 2.5-1-2.5-6h5z" fill="#fff" stroke="#222" />
      </svg>

      {/* input method bubble */}
      <div className="absolute left-[1182px] top-[969px] flex h-[26px] w-[61px] items-center justify-center gap-[3px] rounded-[5px] bg-white text-[13px] text-[#444] shadow-[1px_2px_4px_rgba(0,0,0,0.5)]">
        CH
        <span className="text-[12px]">♪</span>
        简
      </div>

      {/* red arrows drawn on the screenshot */}
      <svg width="1814" height="1029" className="pointer-events-none absolute left-0 top-0 drop-shadow-[3px_3px_3px_rgba(0,0,0,0.5)]">
        {ARROWS.map((a) => (
          <polygon key={a.join()} points={arrowPoints(a)} fill="#ee0000" />
        ))}
      </svg>

      {/* site watermark */}
      <div className="absolute left-[1655px] top-[976px] flex opacity-90">
        <svg width="44" height="46" viewBox="0 0 44 46" fill="none">
          <path d="M42 2C22 3 4 14 2 26c-1 8 6 11 13 9" stroke="#7fbde8" strokeWidth="3.5" />
          <path d="M30 16c-12-4-22 4-20 12 1 5 9 6 13 2 3-3 1-7-3-6" stroke="#4a90c8" strokeWidth="3" />
          <path d="M32 14c6 8 2 20-10 26-5 2-9 4-12 4" stroke="#7cc576" strokeWidth="4" />
          <path d="M24 38c-4 3-9 5-13 6" stroke="#e8dc5a" strokeWidth="3" />
        </svg>
        <div className="-ml-px flex flex-col">
          <span className="mt-[2px] text-[21px] font-bold leading-[26px] text-[#3f8fd0]">极光下载站</span>
          <span className="text-[16.5px] leading-[18px] text-[#55b96a]">www.xz7.com</span>
        </div>
      </div>
    </div>
  );
}
